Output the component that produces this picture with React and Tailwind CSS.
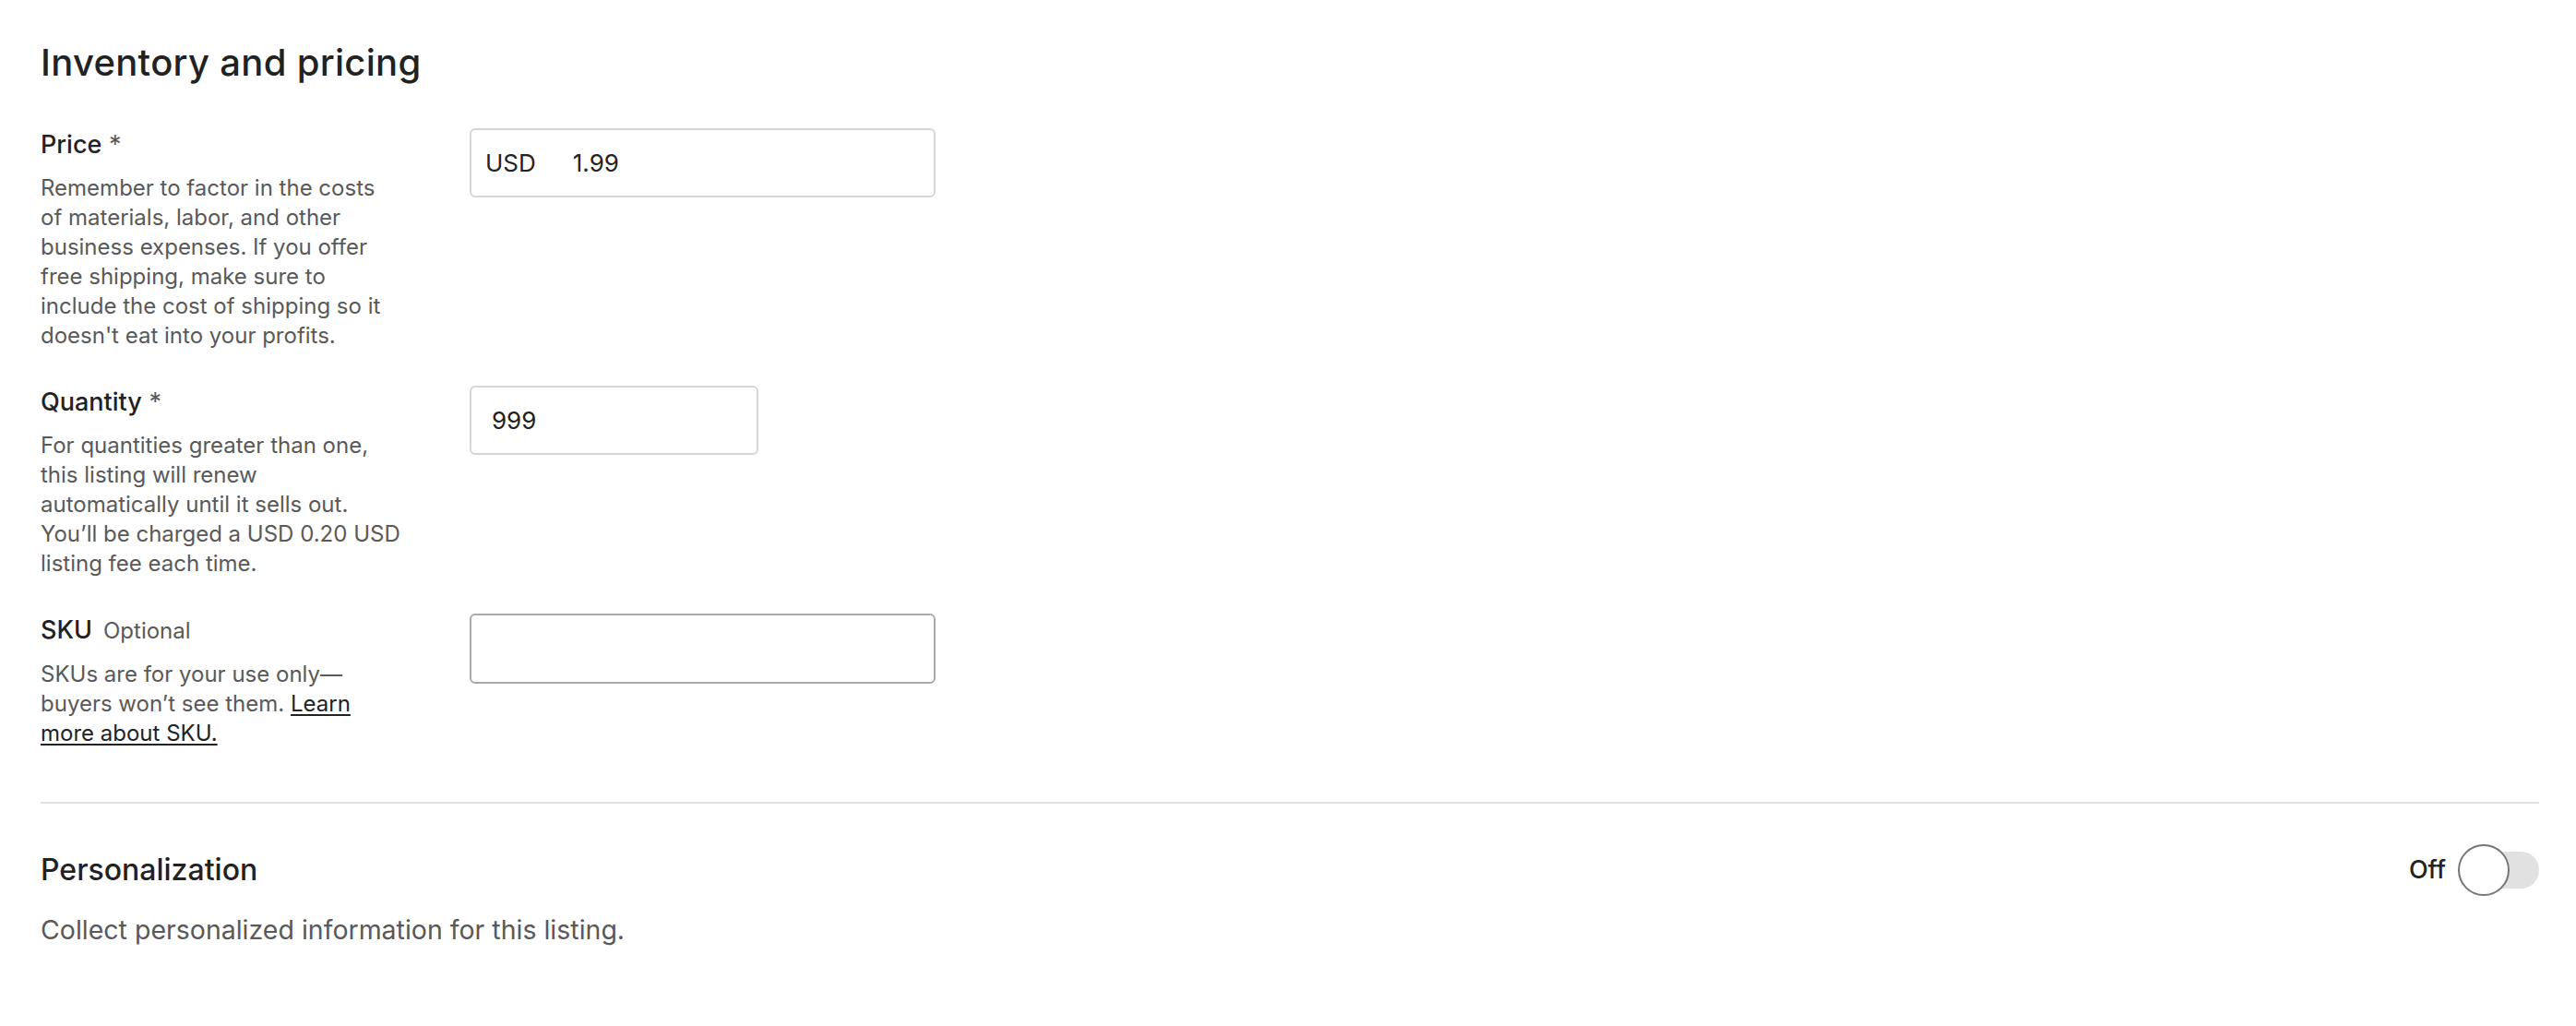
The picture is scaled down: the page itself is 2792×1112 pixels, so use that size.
import React from 'react';

const font = { fontFamily: 'Inter, "Noto Sans", sans-serif' };

const FieldRow = ({ label, extra, children, input }) => {
    return (
        <div className="grid grid-cols-[465px_1fr]">
            <div className="w-[440px] pt-[1px]">
                <div className="text-[27px] leading-[33px] font-medium text-[#222222]">
                    {label}
                    {extra}
                </div>
                <div className="mt-[15px] text-[24px] leading-[32px] text-[#595959]">{children}</div>
            </div>
            <div>{input}</div>
        </div>
    );
};

const Required = () => <span className="font-normal text-[#595959]"> *</span>;

export default function App() {
    return (
        <div className="min-h-screen bg-white pl-[44px] pr-[40px] pt-[45px]" style={font}>
            <h2 className="text-[40px] leading-[46px] font-medium text-[#222222] tracking-[0.3px]">Inventory and pricing</h2>

            <div className="mt-[48px] flex flex-col gap-[38px]">
                <FieldRow
                    label="Price"
                    extra={<Required />}
                    input={
                        <div className="flex items-center w-[505px] h-[75px] border-2 border-[#d6d6d6] rounded-[6px] pl-[15px] text-[26px] text-[#222222]">
                            <span>USD</span>
                            <span className="ml-[40px]">1.99</span>
                        </div>
                    }
                >
                    Remember to factor in the costs
                    <br />
                    of materials, labor, and other
                    <br />
                    business expenses. If you offer
                    <br />
                    free shipping, make sure to
                    <br />
                    include the cost of shipping so it
                    <br />
                    doesn't eat into your profits.
                </FieldRow>

                <FieldRow
                    label="Quantity"
                    extra={<Required />}
                    input={
                        <div className="flex items-center w-[313px] h-[75px] border-2 border-[#d6d6d6] rounded-[6px] pl-[22px] text-[26px] text-[#222222]">
                            999
                        </div>
                    }
                >
                    For quantities greater than one,
                    <br />
                    this listing will renew
                    <br />
                    automatically until it sells out.
                    <br />
                    You’ll be charged a USD 0.20 USD
                    <br />
                    listing fee each time.
                </FieldRow>

                <FieldRow
                    label="SKU"
                    extra={<span className="ml-[12px] text-[24px] font-normal text-[#595959]">Optional</span>}
                    input={<div className="w-[505px] h-[76px] border-2 border-[#a9a9a9] rounded-[6px] bg-white" />}
                >
                    SKUs are for your use only—
                    <br />
                    buyers won’t see them.{' '}
                    <a href="#" className="text-[#222222] underline underline-offset-[3px]">
                        Learn
                        <br />
                        more about SKU.
                    </a>
                </FieldRow>
            </div>

            <div className="mt-[58px] h-[2px] bg-[#e1e1e1]" />

            <div className="mt-[44px] flex items-center justify-between">
                <h3 className="text-[32px] leading-[40px] font-medium text-[#222222]">Personalization</h3>
                <div className="flex items-center gap-[13px]">
                    <span className="text-[27px] font-medium text-[#222222]">Off</span>
                    <div className="relative flex items-center w-[88px] h-[56px]">
                        <div className="ml-[3px] w-[85px] h-[40px] rounded-full bg-[#e1e1e1]" />
                        <div className="absolute left-0 top-0 w-[56px] h-[56px] rounded-full border-2 border-[#767676] bg-white" />
                    </div>
                </div>
            </div>
            <p className="mt-[19px] text-[28.5px] leading-[36px] text-[#595959]">
                Collect personalized information for this listing.
            </p>
        </div>
    );
}
